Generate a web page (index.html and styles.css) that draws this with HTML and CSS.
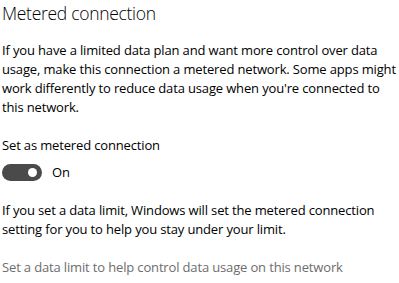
FILE: index.html
```html
<!DOCTYPE html>
<html>
<head>
    <title>Metered connection</title>
    <link rel="stylesheet" href="styles.css">
</head>
<body>
    <div class="page">
        <h1 class="title">Metered connection</h1>
        <p class="text">If you have a limited data plan and want more control over data usage, make this connection a metered network. Some apps might work differently to reduce data usage when you're connected to this network.</p>
        <p class="label">Set as metered connection</p>
        <div class="toggle-row">
            <span class="toggle"><span class="knob"></span></span>
            <span class="state">On</span>
        </div>
        <p class="text">If you set a data limit, Windows will set the metered connection setting for you to help you stay under your limit.</p>
        <p class="link">Set a data limit to help control data usage on this network</p>
    </div>
</body>
</html>
```

FILE: styles.css
```css
body {
    margin: 0;
    padding: 0;
    background: #fff;
    font-family: "Open Sans", "Noto Sans", sans-serif;
    color: #000;
}

.page {
    padding: 0 0 0 2px;
}

.title {
    margin: 0;
    padding-top: 1px;
    font-size: 17.5px;
    font-weight: 300;
    line-height: 25px;
    letter-spacing: -0.3px;
}

.text,
.label,
.link {
    margin: 15px 0 0 0;
    font-size: 13px;
    line-height: 19px;
    letter-spacing: -0.15px;
}

.label {
    margin-top: 19px;
}

.toggle-row {
    display: flex;
    align-items: center;
    margin-top: 7px;
    margin-bottom: 19px;
    height: 20px;
}

.toggle-row + .text {
    margin-top: 0;
}

.toggle {
    display: flex;
    align-items: center;
    justify-content: flex-end;
    width: 40px;
    height: 17px;
    border-radius: 9px;
    background: #4a4a4a;
    box-sizing: border-box;
    padding-right: 5px;
}

.knob {
    width: 9px;
    height: 9px;
    border-radius: 50%;
    background: #fff;
}

.state {
    margin-left: 10px;
    font-size: 13px;
}

.link {
    margin-top: 19px;
    color: #6d6d6d;
}
```
